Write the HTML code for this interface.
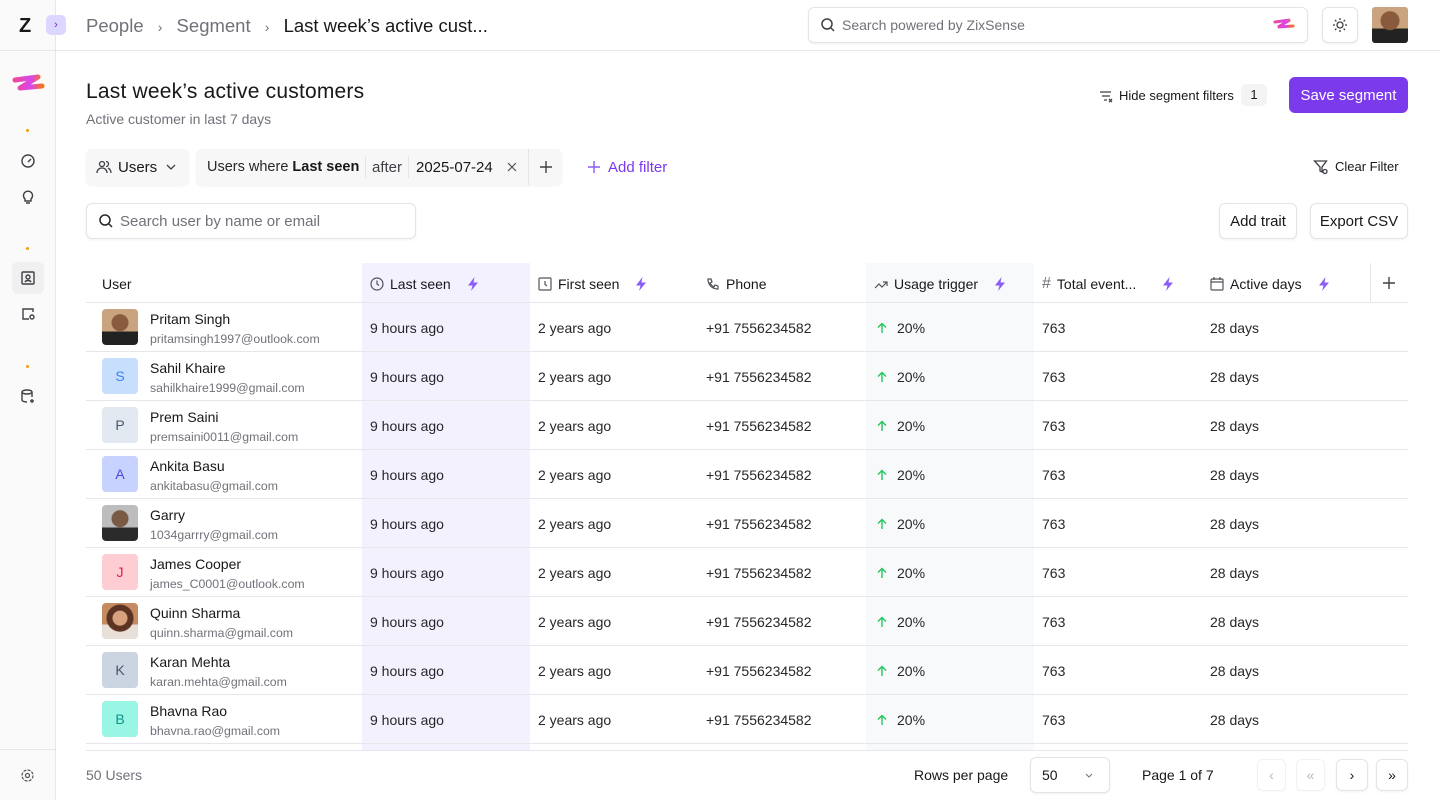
<!DOCTYPE html>
<html><head><meta charset="utf-8"><style>
*{box-sizing:border-box;margin:0;padding:0}
body{width:1440px;height:800px;overflow:hidden;font-family:"Liberation Sans",sans-serif;color:#18181b;background:#fff;position:relative;font-size:14px}
.abs{position:absolute}
.side{left:0;top:0;width:56px;height:800px;background:#fafafa;border-right:1px solid #e5e7eb}
.hl{height:1px;background:#e5e7eb}
svg{display:block}
.btn{border:1px solid #e4e4e7;border-radius:6px;background:#fff;box-shadow:0 1px 2px rgba(0,0,0,.06)}
.col{position:absolute;top:263px;height:487px}
.th{position:absolute;top:264px;height:39px;display:flex;align-items:center;font-size:14px;color:#18181b;gap:6px}
.row{position:absolute;left:86px;width:1322px;height:49px;border-bottom:1px solid #e5e7eb}
.cell{position:absolute;font-size:14px;color:#27272a}
.av{position:absolute;left:16px;top:6px;width:36px;height:36px;border-radius:4px;display:flex;align-items:center;justify-content:center;font-size:14px}
.nm{position:absolute;left:64px;top:8px;font-size:14px;color:#18181b}
.em{position:absolute;left:64px;top:29px;font-size:12.3px;color:#71717a}
.bolt{margin-left:8px}
</style></head><body>
<svg width="0" height="0" style="position:absolute"><defs><linearGradient id="g" x1="0" x2="1"><stop offset="0" stop-color="#ec4899"/><stop offset=".6" stop-color="#d946ef"/><stop offset="1" stop-color="#f97316"/></linearGradient><symbol id="bt" viewBox="0 0 16 16"><path d="M9.5 1L3 9.5h4.5L6 15l7-8.5H8.5z" fill="#8b5cf6"/></symbol></defs></svg>
<div class="abs side"></div>
<div class="abs hl" style="left:0;top:50px;width:1440px"></div>
<div class="abs hl" style="left:0;top:749px;width:56px"></div>
<div class="abs" style="left:19px;top:15px;font-weight:900;font-size:20px;line-height:22px">Z</div>
<div class="abs" style="left:46px;top:15px;width:20px;height:20px;border-radius:5px;background:#ddd6fe;color:#6d28d9;font-size:11px;text-align:center;line-height:20px">›</div>
<svg class="abs" style="left:12px;top:72px" width="34" height="22"><path d="M3 8 L26 5 L8 16 L30 14" stroke="url(#g)" stroke-width="5" fill="none" stroke-linecap="round" stroke-linejoin="round"/></svg>
<div class="abs" style="left:26px;top:129px;width:3px;height:3px;border-radius:2px;background:#f59e0b"></div>
<div class="abs" style="left:26px;top:247px;width:3px;height:3px;border-radius:2px;background:#f59e0b"></div>
<div class="abs" style="left:26px;top:365px;width:3px;height:3px;border-radius:2px;background:#f59e0b"></div>
<svg class="abs" style="left:20px;top:153px" width="16" height="16" fill="none" stroke="#3f3f46" stroke-width="1.4"><circle cx="8" cy="8" r="6"/><path d="M8 9l3-3"/></svg>
<svg class="abs" style="left:20px;top:188px" width="16" height="18" fill="none" stroke="#3f3f46" stroke-width="1.4"><path d="M5 11a4.5 4.5 0 1 1 6 0v2H5z M6 15h4"/></svg>
<div class="abs" style="left:12px;top:262px;width:32px;height:32px;border-radius:6px;background:#f0f0f1"></div>
<svg class="abs" style="left:20px;top:270px" width="16" height="16" fill="none" stroke="#3f3f46" stroke-width="1.4"><rect x="2" y="2" width="12" height="12" rx="1"/><circle cx="8" cy="7" r="2"/><path d="M5 12c1-2 5-2 6 0"/></svg>
<svg class="abs" style="left:20px;top:306px" width="16" height="16" fill="none" stroke="#3f3f46" stroke-width="1.4"><path d="M13 6V3H3v10h6"/><circle cx="12" cy="11" r="2"/></svg>
<svg class="abs" style="left:20px;top:388px" width="16" height="16" fill="none" stroke="#3f3f46" stroke-width="1.4"><ellipse cx="7" cy="4" rx="5" ry="2"/><path d="M2 4v8c0 1 2 2 5 2M12 4v5M12 11v4M10 13h4"/></svg>
<svg class="abs" style="left:20px;top:768px" width="15" height="15" fill="none" stroke="#52525b" stroke-width="1.2"><circle cx="7.5" cy="7.5" r="2"/><circle cx="7.5" cy="7.5" r="5.5" stroke-dasharray="3 1.3"/></svg>
<div class="abs" style="left:86px;top:15px;font-size:18.5px;color:#71717a">People <span style="margin:0 9px;font-size:14px">›</span> Segment <span style="margin:0 9px;font-size:14px">›</span> <span style="color:#18181b">Last week’s active cust...</span></div>
<div class="abs btn" style="left:808px;top:7px;width:500px;height:36px"></div>
<svg class="abs" style="left:820px;top:17px" width="16" height="16" fill="none" stroke="#3f3f46" stroke-width="1.5"><circle cx="7" cy="7" r="5"/><path d="M11 11l3 3"/></svg>
<div class="abs" style="left:842px;top:17px;font-size:14px;color:#71717a">Search powered by ZixSense</div>
<svg class="abs" style="left:1273px;top:17px" width="22" height="14"><path d="M2 5 L17 3 L5 10 L20 9" stroke="url(#g)" stroke-width="3" fill="none" stroke-linecap="round"/></svg>
<div class="abs btn" style="left:1322px;top:7px;width:36px;height:36px"></div>
<svg class="abs" style="left:1332px;top:17px" width="16" height="16" fill="none" stroke="#3f3f46" stroke-width="1.3"><circle cx="8" cy="8" r="3"/><path d="M8 1v2M8 13v2M1 8h2M13 8h2M3 3l1.4 1.4M11.6 11.6L13 13M3 13l1.4-1.4M11.6 4.4L13 3"/></svg>
<div class="abs" style="left:1372px;top:7px;width:36px;height:36px;border-radius:3px;background:radial-gradient(circle at 50% 38%,#8a5a3c 0 9px,transparent 10px),linear-gradient(#c9a47e 60%,#222 60%)"></div>
<div class="abs" style="left:86px;top:80px;font-size:21px;color:#18181b;letter-spacing:.2px">Last week’s active customers</div>
<div class="abs" style="left:86px;top:111px;font-size:14px;color:#71717a">Active customer in last 7 days</div>
<svg class="abs" style="left:1098px;top:88px" width="16" height="16" fill="none" stroke="#3f3f46" stroke-width="1.3"><path d="M2 4h11M4 8h8M6 12h3M11 11l3 3M14 11l-3 3"/></svg>
<div class="abs" style="left:1119px;top:88px;font-size:13px">Hide segment filters</div>
<div class="abs" style="left:1241px;top:84px;width:26px;height:22px;border-radius:5px;background:#f4f4f5;font-size:13px;text-align:center;line-height:22px">1</div>
<div class="abs" style="left:1289px;top:77px;width:119px;height:36px;border-radius:6px;background:#7c3aed;color:#fff;font-size:15px;text-align:center;line-height:37px">Save segment</div>
<div class="abs" style="left:86px;top:149px;width:103px;height:36px;border-radius:6px;background:#f7f7f8;box-shadow:0 1px 2px rgba(0,0,0,.06)"></div>
<svg class="abs" style="left:96px;top:159px" width="16" height="16" fill="none" stroke="#3f3f46" stroke-width="1.3"><circle cx="6" cy="5" r="2.5"/><path d="M1 14c0-3 2-5 5-5s5 2 5 5M10 2.5a2.5 2.5 0 0 1 0 5M12 9c2 1 3 3 3 5"/></svg>
<div class="abs" style="left:118px;top:159px;font-size:15px">Users</div>
<svg class="abs" style="left:165px;top:161px" width="12" height="12" fill="none" stroke="#3f3f46" stroke-width="1.3"><path d="M2 4l4 4 4-4"/></svg>
<div class="abs" style="left:196px;top:149px;width:366px;height:36px;border-radius:6px;background:#f7f7f8;box-shadow:0 1px 2px rgba(0,0,0,.06)"></div>
<div class="abs" style="left:207px;top:159px;font-size:14.5px;color:#27272a">Users where <b style="color:#18181b;font-weight:600">Last seen</b></div>
<div class="abs" style="left:365px;top:156px;width:1px;height:22px;background:#e4e4e7"></div>
<div class="abs" style="left:372px;top:159px;font-size:15px;color:#3f3f46">after</div>
<div class="abs" style="left:408px;top:156px;width:1px;height:22px;background:#e4e4e7"></div>
<div class="abs" style="left:416px;top:159px;font-size:15px">2025-07-24</div>
<svg class="abs" style="left:506px;top:161px" width="12" height="12" stroke="#52525b" stroke-width="1.2"><path d="M2 2l8 8M10 2l-8 8"/></svg>
<div class="abs" style="left:528px;top:149px;width:1px;height:36px;background:#e4e4e7"></div>
<svg class="abs" style="left:539px;top:160px" width="14" height="14" stroke="#3f3f46" stroke-width="1.4"><path d="M7 1v12M1 7h12"/></svg>
<svg class="abs" style="left:587px;top:160px" width="14" height="14" stroke="#8b5cf6" stroke-width="1.4"><path d="M7 1v12M1 7h12"/></svg>
<div class="abs" style="left:608px;top:159px;font-size:15px;color:#7c3aed">Add filter</div>
<svg class="abs" style="left:1313px;top:159px" width="16" height="16" fill="none" stroke="#3f3f46" stroke-width="1.3"><path d="M1.5 2h12l-4.5 6v5l-2-1V8z"/><circle cx="12" cy="12.5" r="2"/></svg>
<div class="abs" style="left:1335px;top:159px;font-size:13px">Clear Filter</div>
<div class="abs btn" style="left:86px;top:203px;width:330px;height:36px"></div>
<svg class="abs" style="left:98px;top:213px" width="16" height="16" fill="none" stroke="#27272a" stroke-width="1.5"><circle cx="7" cy="7" r="5"/><path d="M11 11l3 3"/></svg>
<div class="abs" style="left:120px;top:213px;font-size:15px;color:#71717a">Search user by name or email</div>
<div class="abs btn" style="left:1219px;top:203px;width:78px;height:36px;text-align:center;line-height:35px;font-size:15px">Add trait</div>
<div class="abs btn" style="left:1310px;top:203px;width:98px;height:36px;text-align:center;line-height:35px;font-size:15px">Export CSV</div>
<div class="col" style="left:362px;width:168px;background:#f3f1fe"></div>
<div class="col" style="left:866px;width:168px;background:#f8f9fb"></div>
<div class="abs" style="left:1370px;top:263px;width:1px;height:39px;background:#e5e7eb"></div>
<div class="abs hl" style="left:86px;top:302px;width:1322px"></div>
<div class="th" style="left:102px">User</div>
<div class="th" style="left:370px"><svg width="14" height="14" fill="none" stroke="#52525b" stroke-width="1.2"><circle cx="7" cy="7" r="6"/><path d="M7 3.5V7l2 1.5"/></svg>Last seen <svg class="bolt" width="16" height="16"><use href="#bt"/></svg></div>
<div class="th" style="left:538px"><svg width="14" height="14" fill="none" stroke="#52525b" stroke-width="1.2"><rect x="1" y="1" width="12" height="12" rx="1"/><path d="M7 4v3.5l2 1.5"/></svg>First seen <svg class="bolt" width="16" height="16"><use href="#bt"/></svg></div>
<div class="th" style="left:706px"><svg width="14" height="14" fill="none" stroke="#52525b" stroke-width="1.2"><path d="M2 2h3l1 3-2 1c1 2 2 3 4 4l1-2 3 1v3c-6 0-10-4-10-10z"/></svg>Phone</div>
<div class="th" style="left:874px"><svg width="14" height="14" fill="none" stroke="#52525b" stroke-width="1.2"><path d="M1 11l4-4 3 3 5-5M9 5h4v4"/></svg>Usage trigger <svg class="bolt" width="16" height="16"><use href="#bt"/></svg></div>
<div class="th" style="left:1042px"><span style="color:#71717a;font-size:16px">#</span>Total event... <svg class="bolt" style="margin-left:18px" width="16" height="16"><use href="#bt"/></svg></div>
<div class="th" style="left:1210px"><svg width="14" height="14" fill="none" stroke="#52525b" stroke-width="1.2"><rect x="1" y="2" width="12" height="11" rx="1"/><path d="M1 5h12M4 0v3M10 0v3"/></svg>Active days <svg class="bolt" width="16" height="16"><use href="#bt"/></svg></div>
<svg class="abs" style="left:1382px;top:276px" width="14" height="14" stroke="#3f3f46" stroke-width="1.4"><path d="M7 1v12M1 7h12"/></svg>

<div id="rows"></div>
<script>
var d=[["Pritam Singh","pritamsingh1997@outlook.com","p1"],["Sahil Khaire","sahilkhaire1999@gmail.com","S","#c7defd","#3b82f6"],["Prem Saini","premsaini0011@gmail.com","P","#e2e8f0","#475569"],["Ankita Basu","ankitabasu@gmail.com","A","#c7d2fe","#4f46e5"],["Garry","1034garrry@gmail.com","p2"],["James Cooper","james_C0001@outlook.com","J","#fecdd3","#e11d48"],["Quinn Sharma","quinn.sharma@gmail.com","p3"],["Karan Mehta","karan.mehta@gmail.com","K","#cbd5e1","#475569"],["Bhavna Rao","bhavna.rao@gmail.com","B","#99f6e4","#0d9488"]];
var ph={p1:"radial-gradient(circle at 50% 38%,#8a5a3c 0 8px,transparent 9px),linear-gradient(#c9a47e 62%,#222 62%)",p2:"radial-gradient(circle at 50% 38%,#7a5a45 0 8px,transparent 9px),linear-gradient(#bdbdbd 62%,#2a2a2a 62%)",p3:"radial-gradient(circle at 50% 42%,#d9a27f 0 7px,#5b3322 8px 13px,transparent 14px),linear-gradient(#c48a60 60%,#e8e0d8 60%)"};
var h="";
var arr='<svg style="display:inline-block;vertical-align:-1px;margin-right:9px" width="12" height="12" fill="none" stroke="#22c55e" stroke-width="1.4"><path d="M6 11V1.5M2 5.5l4-4 4 4"/></svg>';
d.forEach(function(r,i){var t=303+i*49;
var av=r[2].length>1?'<div class="av" style="background:'+ph[r[2]]+'"></div>':'<div class="av" style="background:'+r[3]+';color:'+r[4]+'">'+r[2]+'</div>';
h+='<div class="row" style="top:'+t+'px">'+av+'<div class="nm">'+r[0]+'</div><div class="em">'+r[1]+'</div>'+
'<div class="cell" style="left:284px;top:17px">9 hours ago</div><div class="cell" style="left:452px;top:17px">2 years ago</div><div class="cell" style="left:620px;top:17px">+91 7556234582</div>'+
'<div class="cell" style="left:790px;top:17px">'+arr+'20%</div><div class="cell" style="left:956px;top:17px">763</div><div class="cell" style="left:1124px;top:17px">28 days</div></div>';});
document.getElementById("rows").innerHTML=h;
</script>
<div class="abs" style="left:56px;top:750px;width:1384px;height:50px;background:#fff"></div>
<div class="abs hl" style="left:86px;top:750px;width:1322px"></div>
<div class="abs" style="left:86px;top:767px;font-size:14px;color:#71717a">50 Users</div>
<div class="abs" style="left:914px;top:767px;font-size:14px">Rows per page</div>
<div class="abs btn" style="left:1030px;top:757px;width:80px;height:36px"></div>
<div class="abs" style="left:1042px;top:767px;font-size:14px">50</div>
<svg class="abs" style="left:1083px;top:769px" width="12" height="12" fill="none" stroke="#71717a" stroke-width="1"><path d="M3 5l3 3 3-3"/></svg>
<div class="abs" style="left:1142px;top:767px;font-size:14px">Page 1 of 7</div>
<div class="abs btn" style="left:1257px;top:759px;width:29px;height:32px;opacity:.5;text-align:center;line-height:30px;color:#71717a">‹</div>
<div class="abs btn" style="left:1296px;top:759px;width:29px;height:32px;opacity:.5;text-align:center;line-height:30px;color:#71717a">«</div>
<div class="abs btn" style="left:1336px;top:759px;width:32px;height:32px;text-align:center;line-height:30px">›</div>
<div class="abs btn" style="left:1376px;top:759px;width:32px;height:32px;text-align:center;line-height:30px">»</div>
</body></html>
